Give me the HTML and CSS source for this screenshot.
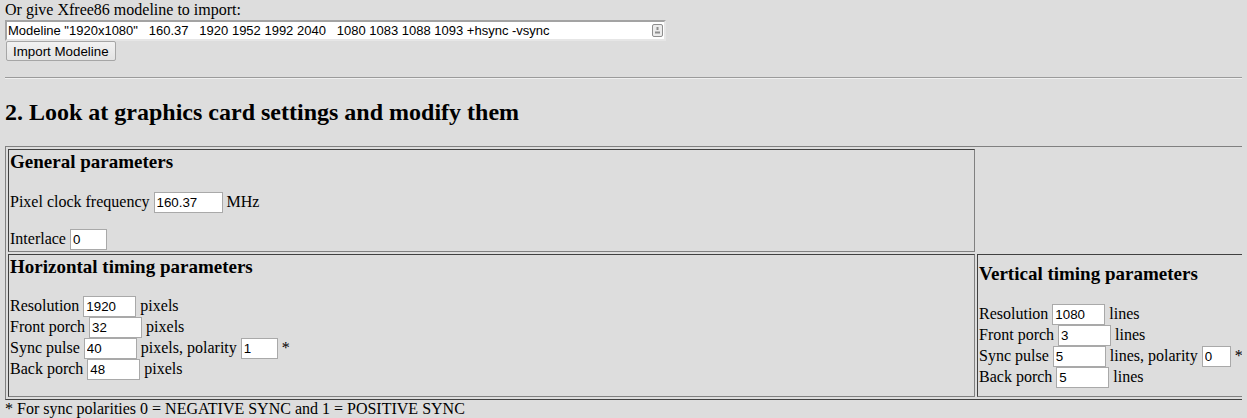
FILE: index.html
```html
<!DOCTYPE html>
<html>
<head>
<meta charset="utf-8">
<title>Modeline</title>
<link rel="stylesheet" href="styles.css">
</head>
<body>
<div class="intro">Or give Xfree86 modeline to import:</div>
<div class="modeline-wrap">
  <input class="modeline" type="text" value="Modeline &quot;1920x1080&quot;   160.37   1920 1952 1992 2040   1080 1083 1088 1093 +hsync -vsync">
  <span class="autofill-icon"><svg width="11" height="13" viewBox="0 0 11 13"><rect x="0.5" y="0.5" width="10" height="12" rx="1.5" fill="#ececec" stroke="#8e8e8e"/><rect x="4.5" y="3" width="2" height="3" fill="#8e8e8e"/><rect x="3" y="7.5" width="5" height="2" fill="#8e8e8e"/></svg></span>
</div>
<button class="btn" type="button">Import Modeline</button>
<hr class="rule">
<h2 class="section-title">2. Look at graphics card settings and modify them</h2>
<table class="params">
  <tr>
    <td class="cell cell-main">
      <h3 class="cell-title">General parameters</h3>
      <p class="fields">Pixel clock frequency <input class="num w-clock" type="text" value="160.37"> MHz</p>
      <p class="fields">Interlace <input class="num w-sm" type="text" value="0"></p>
    </td>
  </tr>
  <tr>
    <td class="cell cell-main cell-tall">
      <h3 class="cell-title">Horizontal timing parameters</h3>
      <p class="fields">Resolution <input class="num w-md" type="text" value="1920"> pixels<br>Front porch <input class="num w-md" type="text" value="32"> pixels<br>Sync pulse <input class="num w-md" type="text" value="40"> pixels, polarity <input class="num w-sm" type="text" value="1"> *<br>Back porch <input class="num w-md" type="text" value="48"> pixels</p>
    </td>
    <td class="cell cell-side">
      <h3 class="cell-title">Vertical timing parameters</h3>
      <p class="fields">Resolution <input class="num w-md" type="text" value="1080"> lines<br>Front porch <input class="num w-md" type="text" value="3"> lines<br>Sync pulse <input class="num w-md" type="text" value="5"> lines, polarity <input class="num w-xs" type="text" value="0"> *<br>Back porch <input class="num w-md" type="text" value="5"> lines</p>
    </td>
  </tr>
</table>
<div class="footnote">* For sync polarities 0 = NEGATIVE SYNC and 1 = POSITIVE SYNC</div>
</body>
</html>
```

FILE: styles.css
```css
html {
  overflow: hidden;
}
body {
  margin: 0 5px;
  background: #dddddd;
  color: #000;
  font-family: "Liberation Serif", "Times New Roman", serif;
  font-size: 16px;
}
.intro {
  padding-top: 1px;
}
.modeline-wrap {
  position: relative;
  width: 661px;
  height: 21px;
  margin-top: 1px;
}
.modeline {
  display: block;
  box-sizing: border-box;
  width: 661px;
  height: 21px;
  margin: 0;
  padding: 0 1px;
  border: 2px solid;
  border-color: #a3a3a3 #e6e6e6 #e6e6e6 #a3a3a3;
  background: #fff;
  color: #000;
  font-family: "Liberation Sans", Arial, sans-serif;
  font-size: 13px;
  outline: none;
}
.autofill-icon {
  position: absolute;
  right: 3px;
  top: 4px;
  width: 11px;
  height: 13px;
  display: block;
}
.autofill-icon svg {
  display: block;
}
.btn {
  display: block;
  box-sizing: border-box;
  height: 20px;
  margin: 0 0 0 1px;
  padding: 0 6px;
  border: 1px solid #a6a6a6;
  border-radius: 2px;
  background: linear-gradient(#f2f2f2, #e3e3e3);
  color: #000;
  font-family: "Liberation Sans", Arial, sans-serif;
  font-size: 13.33px;
}
.rule {
  height: 0;
  margin: 16px 0 0;
  border: 0;
  border-top: 1px solid #9b9b9b;
  border-bottom: 1px solid #f0f0f0;
}
.section-title {
  margin: 20px 0;
  font-size: 24px;
  font-weight: bold;
}
.params {
  width: 1258px;
  border-collapse: separate;
  border-spacing: 2px;
  border: 1px solid;
  border-color: #808080 #404040 #404040 #808080;
}
.cell {
  padding: 1px;
  border: 1px solid;
  border-color: #404040 #808080 #808080 #404040;
  vertical-align: middle;
}
.cell-main {
  width: 963px;
}
.cell-tall {
  vertical-align: top;
  padding-bottom: 16px;
}
.cell-title {
  margin: 0 0 18.72px;
  font-size: 19px;
  font-weight: bold;
}
.fields {
  margin: 16px 0 0;
}
.cell-title + .fields {
  margin-top: 0;
}
.num {
  box-sizing: border-box;
  height: 21px;
  margin: 0;
  padding: 1px 2px;
  border: 1px solid #a9a9a9;
  background: #fff;
  color: #000;
  font-family: "Liberation Sans", Arial, sans-serif;
  font-size: 13.33px;
  line-height: 15px;
}
.w-clock {
  width: 69px;
}
.w-md {
  width: 53px;
}
.w-sm {
  width: 37px;
}
.w-xs {
  width: 29px;
}
.footnote {
  margin: 0;
}
```
